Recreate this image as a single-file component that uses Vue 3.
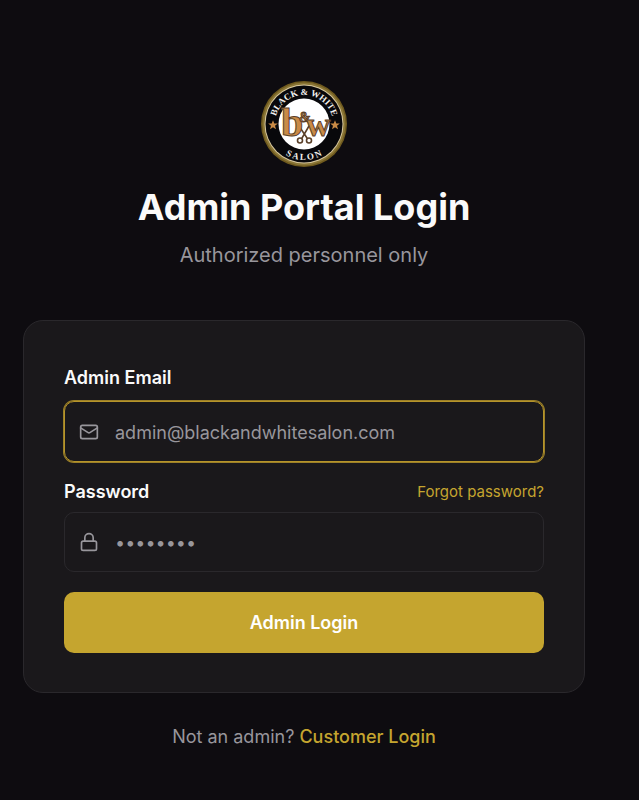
<script setup>
import { ref } from "vue";

const email = ref("");
const password = ref("");
</script>

<template>
  <main class="page">
    <header class="header">
      <svg class="logo" viewBox="0 0 86 86" role="img" aria-label="Black &amp; White Salon">
        <defs>
          <path id="arc-top" d="M14 43a29 29 0 0 1 58 0" />
          <path id="arc-bottom" d="M7 43a36 36 0 0 0 72 0" />
          <path id="star" d="M0-4.800 1.300-1.500 4.800-1.400 2 .8 3 4.200 0 2.200-3 4.200-2 .8-4.800-1.400-1.300-1.500z" />
        </defs>
        <circle cx="43" cy="43" r="43" fill="#6f5a1e" />
        <circle cx="43" cy="43" r="41.500" fill="#8a7636" />
        <circle cx="43" cy="43" r="39.500" fill="#d9c9a0" />
        <circle cx="43" cy="43" r="38.500" fill="#08080b" />
        <circle cx="43" cy="43" r="25.500" fill="#fff" />
        <text class="ring-text"><textPath href="#arc-top" startOffset="50%">BLACK &amp; WHITE</textPath></text>
        <text class="ring-text"><textPath href="#arc-bottom" startOffset="50%">S A L O N</textPath></text>
        <use href="#star" x="12" y="44" fill="#c98a45" />
        <use href="#star" x="74" y="44" fill="#c98a45" />
        <g fill="none" stroke="#5a4029" stroke-width="1.600" stroke-linecap="round">
          <path d="M38 45l8 12M48 45l-7 12" />
          <circle cx="39" cy="59.500" r="2.500" />
          <circle cx="48" cy="59.500" r="2.500" />
        </g>
        <text class="mono" y="55">
          <tspan class="b" x="20">b</tspan><tspan class="amp" x="38" y="41">&amp;</tspan><tspan class="w" x="45" y="55">w</tspan>
        </text>
      </svg>
      <h1>Admin Portal Login</h1>
      <p>Authorized personnel only</p>
    </header>

    <form class="card" @submit.prevent>
      <label for="email">Admin Email</label>
      <div class="field active">
        <svg class="icon" viewBox="0 0 24 24" aria-hidden="true">
          <rect x="2" y="4" width="20" height="16" rx="2" />
          <path d="m22 7-8.970 5.700a1.940 1.940 0 0 1-2.060 0L2 7" />
        </svg>
        <input id="email" v-model="email" type="email" placeholder="admin@blackandwhitesalon.com" />
      </div>

      <div class="label-row">
        <label for="password">Password</label>
        <a class="forgot" href="#">Forgot password?</a>
      </div>
      <div class="field">
        <svg class="icon" viewBox="0 0 24 24" aria-hidden="true">
          <rect x="3" y="11" width="18" height="11" rx="2" />
          <path d="M7 11V7a5 5 0 0 1 10 0v4" />
        </svg>
        <input id="password" v-model="password" type="password" placeholder="••••••••" />
      </div>

      <button class="submit" type="submit">Admin Login</button>
    </form>

    <p class="switch">Not an admin? <a href="#">Customer Login</a></p>
  </main>
</template>

<style>
body {
  margin: 0;
  background: #0e0c10;
}
</style>

<style scoped>
.page {
  box-sizing: border-box;
  min-height: 100vh;
  padding: 81px 54px 40px 23px;
  background: #0e0c10;
  color: #fafafa;
  font-family: Inter, "Liberation Sans", sans-serif;
  font-size: 18px;
  line-height: 28px;
}

.header {
  display: flex;
  flex-direction: column;
  align-items: center;
  text-align: center;
}

.logo {
  width: 86px;
  height: 86px;
}

.ring-text {
  fill: #f4f2ee;
  font-family: "Liberation Serif", serif;
  font-size: 9px;
  font-weight: 700;
  text-anchor: middle;
}

.mono {
  fill: #c98a45;
  stroke: #5a4029;
  stroke-width: 1;
  font-family: "Liberation Serif", serif;
  font-weight: 700;
}

.mono .b {
  font-size: 40px;
}

.mono .w {
  font-size: 34px;
}

.mono .amp {
  font-size: 14px;
}

h1 {
  margin: 16px 0 0;
  font-size: 36px;
  font-weight: 700;
  line-height: 48px;
}

.header p {
  margin: 9px 0 0;
  color: #98969c;
  font-size: 20px;
  line-height: 30px;
}

.card {
  display: flex;
  flex-direction: column;
  max-width: 480px;
  margin: 50px auto 0;
  padding: 43px 40px 39px;
  border: 1px solid #2a282c;
  border-radius: 20px;
  background: #1a181b;
}

label {
  font-weight: 600;
}

.field {
  display: flex;
  align-items: center;
  gap: 16px;
  height: 58px;
  margin-top: 6px;
  padding: 0 14px;
  border: 1px solid #2a282c;
  border-radius: 10px;
}

.field.active {
  height: 59px;
  margin-top: 9px;
  border-color: #b6942a;
  box-shadow: 0 0 0 1px #9c8028;
}

.icon {
  flex: none;
  width: 20px;
  height: 20px;
  fill: none;
  stroke: #98969c;
  stroke-width: 2;
  stroke-linecap: round;
  stroke-linejoin: round;
}

input {
  flex: 1;
  min-width: 0;
  padding: 2px 0 0;
  border: 0;
  outline: 0;
  background: transparent;
  color: #fafafa;
  font: inherit;
}

input::placeholder {
  color: #98969c;
  opacity: 1;
}

.label-row {
  display: flex;
  align-items: center;
  justify-content: space-between;
  margin-top: 16px;
}

a {
  color: #c5a52f;
  text-decoration: none;
}

.forgot {
  font-size: 15px;
}

.submit {
  height: 61px;
  margin-top: 20px;
  border: 0;
  border-radius: 10px;
  background: #c5a52f;
  color: #fff;
  font: inherit;
  font-weight: 600;
  cursor: pointer;
}

.switch {
  margin: 30px 0 0;
  color: #98969c;
  text-align: center;
}

.switch a {
  font-weight: 500;
}
</style>
